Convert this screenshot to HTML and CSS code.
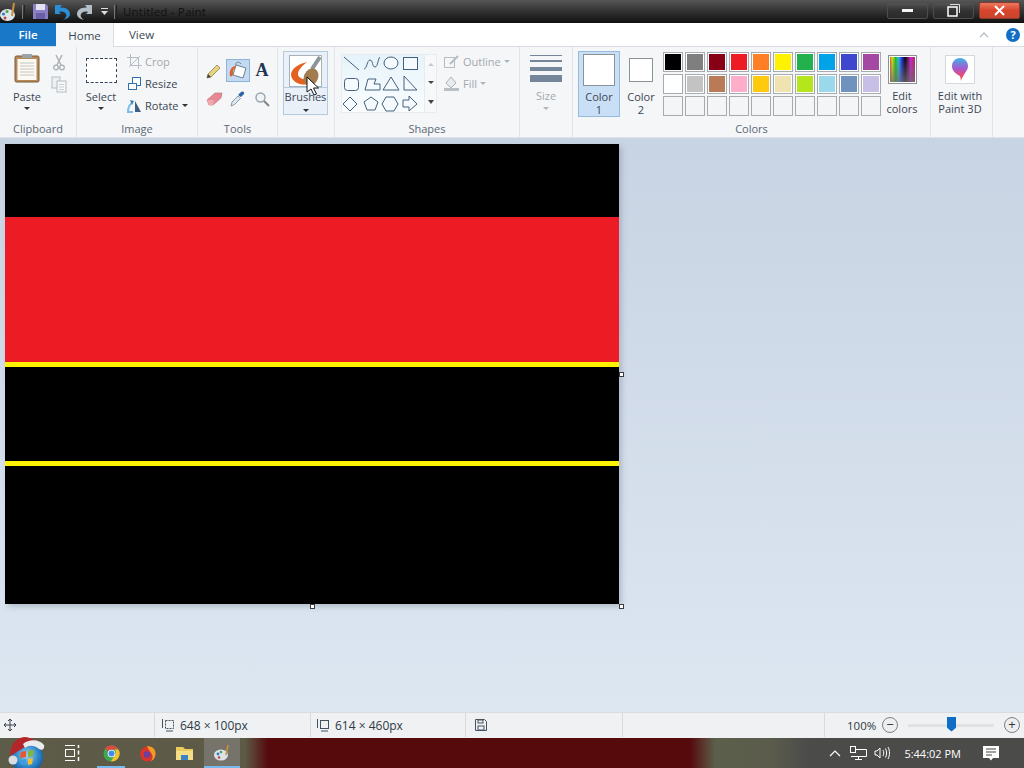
FILE: index.html
```html
<!DOCTYPE html>
<html lang="en">
  <head>
    <meta charset="UTF-8" />
    <title>Untitled - Paint</title>
    <link rel="stylesheet" href="styles.css">
  </head>
  <body>
    <div class="window">
      <!-- title bar -->
      <div class="titlebar">
        <svg class="app-icon" width="18" height="20" viewBox="0 0 18 20"><ellipse cx="7.500" cy="13" rx="7.500" ry="6" fill="#dfe6ea"/><circle cx="3.500" cy="12" r="1.600" fill="#2f7fc1"/><circle cx="7" cy="9.500" r="1.500" fill="#4aa34a"/><circle cx="5" cy="16" r="1.500" fill="#c94040"/><path d="M14 1l-2 13" stroke="#c8923c" stroke-width="2"/></svg>
        <span class="qa-sep"></span>
        <svg class="qa save" width="15" height="15" viewBox="0 0 15 15"><path d="M0 0h13l2 2v13H0z" fill="#8d7fc4"/><rect x="3" y="0" width="9" height="6" fill="#e5e2f2"/><rect x="3" y="9" width="9" height="6" fill="#6a5ea6"/></svg>
        <svg class="qa undo" width="15" height="16" viewBox="0 0 15 16"><path d="M0 1h7L5 3.500C11 3 15 6 15 10c0 3-3 5-7 6 3-2 4-4 3-6-1-2-4-3-7-2L6 10H0z" fill="#2a8fd6"/></svg>
        <svg class="qa redo" width="15" height="16" viewBox="0 0 15 16"><path d="M15 1H8l2 2.500C4 3 0 6 0 10c0 3 3 5 7 6-3-2-4-4-3-6 1-2 4-3 7-2L9 10h6z" fill="#b4bec6"/></svg>
        <svg class="qa-more" width="9" height="9" viewBox="0 0 9 9"><path d="M1 1.500h7" stroke="#ddd"/><path d="M1 4h7L4.500 8z" fill="#ddd"/></svg>
        <span class="qa-sep"></span>
        <span class="title">Untitled - Paint</span>
        <div class="win-btns">
          <div class="win-btn"><span class="min-bar"></span></div>
          <div class="win-btn max"><svg width="13" height="13" viewBox="0 0 13 13"><path d="M3 .500h9.500V9" fill="none" stroke="#ddd"/><rect x="1" y="3" width="9" height="9" fill="none" stroke="#fff" stroke-width="1.500"/></svg></div>
          <div class="win-btn close"><svg width="11" height="11" viewBox="0 0 11 11"><path d="M1 1l9 9M10 1l-9 9" stroke="#fff" stroke-width="2"/></svg></div>
        </div>
      </div>

      <!-- tabs -->
      <div class="tabs">
        <div class="tab file">File</div>
        <div class="tab home">Home</div>
        <div class="tab view">View</div>
        <svg class="collapse" width="10" height="6" viewBox="0 0 10 6"><path d="M1 5l4-4 4 4" fill="none" stroke="#b9bfc6" stroke-width="1.300"/></svg>
        <div class="help">?</div>
      </div>

      <!-- ribbon -->
      <div class="ribbon">
        <div class="group clipboard">
          <div class="group-body">
            <div class="big-btn paste">
              <svg width="26" height="30" viewBox="0 0 26 30"><rect x="1" y="3" width="24" height="26" rx="1.500" fill="#b5895a" stroke="#7a5a38"/><rect x="3.500" y="6" width="19" height="21" fill="#fbf9f2"/><path d="M6 10h14M6 13h14M6 16h14M6 19h14M6 22h14" stroke="#c4c4c0"/><rect x="8" y="1" width="10" height="4" fill="#9aa2aa"/></svg>
              <span class="btn-label">Paste</span>
              <span class="caret"></span>
            </div>
            <div class="small-col">
              <svg width="12" height="17" viewBox="0 0 12 17"><path d="M3 1l5 10M9 1L4 11" stroke="#a9afb5" stroke-width="1.400"/><circle cx="3" cy="13.500" r="2.300" fill="none" stroke="#a9afb5" stroke-width="1.300"/><circle cx="9" cy="13.500" r="2.300" fill="none" stroke="#a9afb5" stroke-width="1.300"/></svg>
              <svg width="16" height="17" viewBox="0 0 16 17"><rect x="1" y="1" width="8" height="11" fill="#eef1f4" stroke="#b4bcc4"/><rect x="6" y="5" width="9" height="11" fill="#f6f7f9" stroke="#b4bcc4"/><path d="M8 8.500h5M8 11h5M8 13.500h5" stroke="#cdd2d8"/></svg>
            </div>
          </div>
          <div class="group-label">Clipboard</div>
        </div>

        <div class="group image">
          <div class="group-body">
            <div class="big-btn select">
              <span class="select-box"></span>
              <span class="btn-label">Select</span>
              <span class="caret"></span>
            </div>
            <div class="text-col">
              <div class="text-row muted">
                <svg width="15" height="15" viewBox="0 0 15 15"><path d="M3.500 0v11.500H15M0 3.500h11.500V15M2 13L13 2" fill="none" stroke="#b6bcc3"/></svg>
                <span>Crop</span>
              </div>
              <div class="text-row">
                <svg width="15" height="15" viewBox="0 0 15 15"><rect x="5.500" y="1.500" width="8" height="8" fill="#fff" stroke="#2f71ad"/><rect x="1.500" y="7.500" width="8" height="6" fill="#fff" stroke="#2f71ad"/></svg>
                <span>Resize</span>
              </div>
              <div class="text-row">
                <svg width="15" height="15" viewBox="0 0 15 15"><path d="M8 14V3l6 11z" fill="#3f5f80"/><path d="M6 14H1C1 9 2 7 5 5" fill="none" stroke="#79bde8" stroke-width="2"/><path d="M3 2l4 1-2 4z" fill="#3f7fb5"/></svg>
                <span>Rotate</span>
                <span class="caret"></span>
              </div>
            </div>
          </div>
          <div class="group-label">Image</div>
        </div>

        <div class="group tools">
          <div class="group-body">
            <div class="tool-grid">
              <div class="tool"><svg width="16" height="16" viewBox="0 0 16 16"><path d="M1 15l1-4 9-9 3 3-9 9z" fill="#e8d27a" stroke="#7d7650" stroke-width=".700"/><path d="M1 15l1-4 3 3z" fill="#444"/></svg></div>
              <div class="tool active"><svg width="20" height="19" viewBox="0 0 20 19"><path d="M8 4l10 3-3 10-10-3z" fill="#fdfdfd" stroke="#6d8194"/><path d="M8 4c-1-3 3-4 5-1" fill="none" stroke="#6d8194"/><path d="M7 5C3 6 1 10 2 15c1 1 3 0 3-2 0-3 0-5 3-7z" fill="#e0602a"/></svg></div>
              <div class="tool letter">A</div>
              <div class="tool"><svg width="17" height="14" viewBox="0 0 17 14"><path d="M1 8l8-7h7l-1 5-8 7H3z" fill="#e58a94" stroke="#c06a74" stroke-width=".600"/><path d="M1 8h7l-1 5H3z" fill="#f0a8ae"/></svg></div>
              <div class="tool"><svg width="16" height="17" viewBox="0 0 16 17"><path d="M1 16l1-4 6-6 2.500 2.500-6 6z" fill="#dce8ef" stroke="#66788a" stroke-width=".700"/><path d="M8 5l3-3c1-1.500 4 0 3 2l-3 3z" fill="#2a65a8"/></svg></div>
              <div class="tool"><svg width="16" height="16" viewBox="0 0 16 16"><circle cx="6.500" cy="6.500" r="4.500" fill="#eef3f6" stroke="#9aa3ab" stroke-width="1.400"/><path d="M10 10l5 5" stroke="#7d8389" stroke-width="2"/></svg></div>
            </div>
          </div>
          <div class="group-label">Tools</div>
        </div>

        <div class="group brushes">
          <div class="group-body">
            <div class="brush-btn">
              <div class="brush-top">
                <svg width="31" height="30" viewBox="0 0 31 30"><path d="M17 6C8 8 1 13 1 19c1 8 11 11 18 9v-5c-6 1-11-1-11-5 0-4 4-8 9-12z" fill="#e4601f"/><path d="M30 1L22 13" stroke="#8c949c" stroke-width="4"/><ellipse cx="21" cy="21" rx="7" ry="9" fill="#a07c4e" transform="rotate(25 21 21)"/></svg>
              </div>
              <span class="btn-label">Brushes</span>
              <span class="caret"></span>
            </div>
          </div>
          <div class="group-label"></div>
        </div>

        <div class="group shapes">
          <div class="group-body">
            <div class="gallery">
              <svg class="shape-set" width="82" height="58" viewBox="0 0 82 58" fill="#f4fafd" stroke="#44607c">
                <path d="M2 2l15 13" fill="none"/>
                <path d="M22 14c3 0 3-9 6-9s2 7 5 7 3-9 5-10" fill="none"/>
                <ellipse cx="49" cy="8" rx="7" ry="6"/>
                <rect x="61.500" y="2.500" width="14" height="12"/>
                <rect x="2.500" y="23.500" width="14" height="12" rx="3"/>
                <path d="M23 35l3-11h8l-2 5h6v6z"/>
                <path d="M49 22l8 13H41z"/>
                <path d="M62 21l13 14H62z"/>
                <path d="M8 42l7 7-7 7-7-7z"/>
                <path d="M29 42l7 5-3 8h-8l-3-8z"/>
                <path d="M44 42h8l4 7-4 7h-8l-4-7z"/>
                <path d="M61 45h6v-4l8 8-8 7v-4h-6z"/>
              </svg>
              <div class="gallery-scroll">
                <span class="arrow up"></span>
                <span class="arrow"></span>
                <span class="arrow more"></span>
              </div>
            </div>
            <div class="text-col shape-opts">
              <div class="text-row muted">
                <svg width="17" height="15" viewBox="0 0 17 15"><rect x="1.500" y="3.500" width="10" height="10" fill="none" stroke="#b6bcc3"/><path d="M7 10l8-8" stroke="#b6bcc3" stroke-width="2"/></svg>
                <span>Outline</span>
                <span class="caret light"></span>
              </div>
              <div class="text-row muted">
                <svg width="17" height="15" viewBox="0 0 17 15"><path d="M8 1l5 6-5 5-5-5z" fill="#e8ecef" stroke="#aab1b8"/><rect x="1" y="12" width="15" height="3" fill="#b9bfc5"/></svg>
                <span>Fill</span>
                <span class="caret light"></span>
              </div>
            </div>
          </div>
          <div class="group-label">Shapes</div>
        </div>

        <div class="group size">
          <div class="group-body">
            <div class="big-btn size-btn">
              <div class="size-lines">
                <span class="line l1"></span>
                <span class="line l2"></span>
                <span class="line l3"></span>
                <span class="line l4"></span>
              </div>
              <span class="btn-label muted">Size</span>
              <span class="caret light"></span>
            </div>
          </div>
          <div class="group-label"></div>
        </div>

        <div class="group colors">
          <div class="group-body">
            <div class="color-btn selected">
              <span class="swatch-big"></span>
              <span class="btn-label">Color<br>1</span>
            </div>
            <div class="color-btn">
              <span class="swatch-mid"></span>
              <span class="btn-label">Color<br>2</span>
            </div>
            <div class="palette">
              <span class="cell c-black"></span><span class="cell c-gray"></span><span class="cell c-maroon"></span><span class="cell c-red"></span><span class="cell c-orange"></span><span class="cell c-yellow"></span><span class="cell c-green"></span><span class="cell c-blue"></span><span class="cell c-indigo"></span><span class="cell c-purple"></span>
              <span class="cell c-white"></span><span class="cell c-silver"></span><span class="cell c-brown"></span><span class="cell c-pink"></span><span class="cell c-gold"></span><span class="cell c-cream"></span><span class="cell c-lime"></span><span class="cell c-sky"></span><span class="cell c-steel"></span><span class="cell c-lilac"></span>
              <span class="cell"></span><span class="cell"></span><span class="cell"></span><span class="cell"></span><span class="cell"></span><span class="cell"></span><span class="cell"></span><span class="cell"></span><span class="cell"></span><span class="cell"></span>
            </div>
            <div class="big-btn edit-colors">
              <span class="rainbow"></span>
              <span class="btn-label">Edit<br>colors</span>
            </div>
          </div>
          <div class="group-label">Colors</div>
        </div>

        <div class="group paint3d">
          <div class="group-body">
            <div class="big-btn edit3d">
              <span class="icon-box">
                <svg width="18" height="26" viewBox="0 0 18 26"><defs><linearGradient id="balloon" x1="0" y1="0" x2="0" y2="1"><stop offset="0" stop-color="#3fb4e8"/><stop offset=".45" stop-color="#a45ad0"/><stop offset=".8" stop-color="#f0486a"/><stop offset="1" stop-color="#f08a4a"/></linearGradient></defs><path d="M9 1c5 0 8 4 8 8 0 5-5 8-7 15l-1-5C5 17 1 14 1 9c0-4 3-8 8-8z" fill="url(#balloon)"/></svg>
              </span>
              <span class="btn-label">Edit with<br>Paint 3D</span>
            </div>
          </div>
          <div class="group-label"></div>
        </div>
      </div>

      <!-- drawing area -->
      <div class="workspace">
        <div class="canvas">
          <div class="band b-top"></div>
          <div class="band b-red"></div>
          <div class="band b-line"></div>
          <div class="band b-mid"></div>
          <div class="band b-line"></div>
          <div class="band b-low"></div>
          <span class="handle right"></span>
          <span class="handle bottom"></span>
          <span class="handle corner"></span>
        </div>
      </div>

      <!-- status bar -->
      <div class="statusbar">
        <div class="stat s-pos"><svg width="12" height="12" viewBox="0 0 12 12"><path d="M6 0v12M0 6h12M4 2l2-2 2 2M4 10l2 2 2-2M2 4L0 6l2 2M10 4l2 2-2 2" fill="none" stroke="#33414f"/></svg></div>
        <div class="stat s-sel"><svg width="14" height="13" viewBox="0 0 14 13"><rect x="4.500" y="1.500" width="8" height="8" fill="none" stroke="#44525f" stroke-dasharray="2 1"/><path d="M1.500 0v9M5 12h7" stroke="#44525f"/></svg><span>648 × 100px</span></div>
        <div class="stat s-size"><svg width="14" height="13" viewBox="0 0 14 13"><rect x="4.500" y="1.500" width="8" height="8" fill="none" stroke="#44525f"/><path d="M1.500 0v9M5 12h7" stroke="#44525f"/></svg><span>614 × 460px</span></div>
        <div class="stat s-disk"><svg width="12" height="12" viewBox="0 0 12 12"><path d="M.500.500h9l2 2v9H.500z" fill="none" stroke="#44525f"/><rect x="3" y="1" width="5" height="3" fill="none" stroke="#44525f"/><rect x="3" y="7" width="6" height="4" fill="none" stroke="#44525f"/></svg></div>
        <div class="stat s-empty"></div>
        <div class="stat s-zoom">
          <span class="zoom-pct">100%</span>
          <span class="zoom-btn">−</span>
          <div class="zoom-track"><span class="zoom-thumb"></span></div>
          <span class="zoom-btn">+</span>
        </div>
      </div>

      <!-- taskbar -->
      <div class="taskbar">
        <div class="orb">
          <svg width="40" height="37" viewBox="0 0 40 37"><defs><radialGradient id="orb" cx=".5" cy=".45" r=".6"><stop offset="0" stop-color="#9ad0ee"/><stop offset=".6" stop-color="#2d86c8"/><stop offset="1" stop-color="#0d4f92"/></radialGradient></defs><circle cx="21" cy="22" r="16" fill="url(#orb)"/><path d="M15 17l5-1v6l-6 1z" fill="#e8562a"/><path d="M22 16l6-1-1 6-5 1z" fill="#7fb83a"/><path d="M14 25l6-1v6l-6-1z" fill="#3f9ce0"/><path d="M22 24l5-1-1 6-4 1z" fill="#f2c02e"/><path d="M4 21C4 11 9 3 18 2c4 0 8 1 11 4L14 15z" fill="#b5262a"/><path d="M17 9c6-5 16-5 21 1 1 4-2 6-5 4-5-4-10-4-14-1z" fill="#e9ebec"/><circle cx="7" cy="25" r="4.500" fill="#d9dde0"/></svg>
        </div>
        <div class="task taskview"><svg width="16" height="16" viewBox="0 0 16 16"><path d="M1 .500h10M1 15.500h10" stroke="#fff"/><rect x="1.500" y="4.500" width="9" height="7" fill="none" stroke="#fff"/><path d="M14.500 0v3M14.500 5.500v4M14.500 12v4" stroke="#fff" stroke-width="1.500"/></svg></div>
        <div class="task chrome"><svg width="17" height="17" viewBox="0 0 17 17"><circle cx="8.500" cy="8.500" r="8" fill="#3fa84f"/><path d="M8.500.500a8 8 0 0 1 7 4h-7a4 4 0 0 0-3.500 2L2 3a8 8 0 0 1 6.500-2.500z" fill="#dd4b3e"/><path d="M15.500 4.500A8 8 0 0 1 8 16.500l3.500-6a4 4 0 0 0 0-6z" fill="#f2c12e"/><circle cx="8.500" cy="8.500" r="3.800" fill="#fff"/><circle cx="8.500" cy="8.500" r="3" fill="#4688ee"/></svg></div>
        <div class="task firefox"><svg width="17" height="17" viewBox="0 0 17 17"><circle cx="8.500" cy="9" r="7.500" fill="#d8352c"/><path d="M8 1c6 0 9 4 8.500 8.500-.5 4-3 6-5 7 2-2 3-5 1-8C11 6 9 4 8 1z" fill="#f59b23"/><circle cx="8" cy="9.500" r="3.300" fill="#6b3fa0"/></svg></div>
        <div class="task explorer"><svg width="17" height="15" viewBox="0 0 17 15"><path d="M0 1h7l2 2h8v11H0z" fill="#eccb5e"/><rect x="0" y="5" width="17" height="9" fill="#f6de86"/><rect x="5" y="9" width="7" height="5" fill="#3a85c8"/></svg></div>
        <div class="task paint-task"><svg width="16" height="16" viewBox="0 0 16 16"><ellipse cx="7" cy="10" rx="7" ry="5.500" fill="#dbe3e8"/><circle cx="4" cy="9" r="1.400" fill="#2f7fc1"/><circle cx="7" cy="7" r="1.300" fill="#4aa34a"/><circle cx="5" cy="12.500" r="1.300" fill="#c94040"/><path d="M14 0l-2 10" stroke="#c8923c" stroke-width="1.600"/></svg></div>
        <div class="tray">
          <svg width="12" height="7" viewBox="0 0 12 7"><path d="M1 6l5-5 5 5" fill="none" stroke="#fff" stroke-width="1.200"/></svg>
          <svg class="tray-net" width="17" height="14" viewBox="0 0 17 14"><path d="M6 3.500h10.500v7H1" fill="none" stroke="#fff"/><rect x=".500" y=".500" width="5" height="6" fill="#4a4a46" stroke="#fff"/><path d="M8.500 10.500v3M5 13.500h7" stroke="#fff"/></svg>
          <svg class="tray-vol" width="17" height="14" viewBox="0 0 17 14"><path d="M1 5h2l3-3v10L3 9H1z" fill="none" stroke="#fff"/><path d="M9 4c1 2 1 4 0 6M11.500 2.500c1.500 3 1.500 6 0 9M14 1c2 4 2 8 0 12" fill="none" stroke="#fff"/></svg>
          <span class="clock">5:44:02 PM</span>
          <svg class="notif" width="16" height="15" viewBox="0 0 16 15"><path d="M0 0h16v12H10l-2 2.500L6 12H0z" fill="#fff"/><path d="M3 3h10M3 6h10M3 9h6" stroke="#444"/></svg>
        </div>
      </div>

      <!-- mouse pointer -->
      <svg class="pointer" width="13" height="20" viewBox="0 0 13 20"><path d="M1 1v15l4-3 3 6 2.500-1-3-6h5z" fill="#fff" stroke="#111"/></svg>
    </div>
  </body>
</html>
```

FILE: styles.css
```css
* {
  box-sizing: border-box;
  margin: 0;
  padding: 0;
}

body {
  width: 1024px;
  height: 768px;
  overflow: hidden;
  font-family: "Open Sans", "Noto Sans", sans-serif;
  font-size: 11px;
  color: #3b4754;
}

svg {
  display: block;
  flex: none;
}

.window {
  position: relative;
  width: 1024px;
  height: 768px;
  display: flex;
  flex-direction: column;
}

/* title bar */
.titlebar {
  height: 23px;
  display: flex;
  align-items: center;
  background: linear-gradient(#565656, #353535 45%, #101010);
}
.app-icon {
  margin-right: 4px;
}
.qa-sep {
  width: 3px;
  height: 14px;
  border-left: 1px solid #777;
  border-right: 1px solid #222;
}
.qa {
  margin-left: 7px;
}
.qa.save {
  margin-left: 8px;
}
.qa-more {
  margin: 0 5px 0 8px;
}
.title {
  margin-left: 6px;
  font-size: 11.500px;
  color: #101010;
  letter-spacing: .2px;
}
.win-btns {
  margin-left: auto;
  display: flex;
  gap: 5px;
  padding: 2px 0 0;
  margin-right: 4px;
  align-self: flex-start;
}
.win-btn {
  width: 41px;
  height: 17px;
  border-radius: 2px;
  display: flex;
  align-items: center;
  justify-content: center;
  border: 1px solid #4d4d4d;
  background: linear-gradient(#545454, #333 50%, #2a2a2a);
}
.win-btn.close {
  background: linear-gradient(#ec7a5f, #d9432a 50%, #c9452f);
  border-color: #8d3b2b;
}
.min-bar {
  width: 11px;
  height: 3px;
  background: #f4f4f4;
}

/* tabs */
.tabs {
  height: 24px;
  display: flex;
  align-items: center;
  background: #fff;
  border-bottom: 1px solid #d9dde2;
  font-size: 11.500px;
}
.tab {
  height: 23px;
  display: flex;
  align-items: center;
  justify-content: center;
  align-self: flex-start;
}
.tab.file {
  width: 56px;
  background: #1a78c9;
  color: #fff;
  font-weight: 600;
}
.tab.home {
  width: 58px;
  height: 24px;
  background: #f5f6f7;
  border-right: 1px solid #d9dde2;
}
.tab.view {
  width: 55px;
}
.collapse {
  margin-left: auto;
  margin-right: 17px;
}
.help {
  width: 14px;
  height: 14px;
  margin-right: 4px;
  border-radius: 50%;
  background: #1170c4;
  color: #fff;
  font-size: 11px;
  font-weight: 700;
  line-height: 14px;
  text-align: center;
}

/* ribbon */
.ribbon {
  height: 91px;
  display: flex;
  background: #f5f6f7;
  border-bottom: 1px solid #dfe3e8;
}
.group {
  display: flex;
  flex-direction: column;
  flex: none;
  height: 90px;
  border-right: 1px solid #e1e4e8;
}
.group-body {
  height: 75px;
  display: flex;
}
.group-label {
  height: 14px;
  line-height: 14px;
  text-align: center;
  color: #5b6876;
}
.btn-label {
  line-height: 13px;
  text-align: center;
}
.muted {
  color: #a2a9b0;
}
.caret {
  width: 0;
  height: 0;
  border: 3px solid transparent;
  border-top: 3px solid #333;
  border-bottom: 0;
}
.caret.light {
  border-top-color: #b0b5bb;
}
.big-btn {
  display: flex;
  flex-direction: column;
  align-items: center;
}
.big-btn .caret {
  margin-top: 4px;
}

.clipboard {
  width: 77px;
}
.paste {
  width: 40px;
  margin-left: 7px;
  padding-top: 6px;
}
.paste .btn-label {
  margin-top: 7px;
}
.small-col {
  width: 23px;
  padding-top: 7px;
  display: flex;
  flex-direction: column;
  align-items: center;
  gap: 5px;
}

.image {
  width: 121px;
}
.select {
  width: 38px;
  margin-left: 5px;
  padding-top: 11px;
}
.select-box {
  width: 31px;
  height: 25px;
  border: 1px dashed #33475a;
  background: #fff;
}
.select .btn-label {
  margin-top: 7px;
}
.text-col {
  margin-left: 7px;
  padding-top: 3px;
  display: flex;
  flex-direction: column;
}
.text-row {
  height: 22px;
  display: flex;
  align-items: center;
  gap: 3px;
}

.tools {
  width: 80px;
}
.tool-grid {
  margin: 12px 0 0 4px;
  display: grid;
  grid-template-columns: repeat(3, 24px);
  grid-auto-rows: 23px;
  row-gap: 5px;
}
.tool {
  display: flex;
  align-items: center;
  justify-content: center;
}
.tool.active {
  background: #c4daf2;
  border: 1px solid #8eb3d8;
}
.tool.letter {
  font-family: "Liberation Serif", serif;
  font-size: 18px;
  font-weight: 700;
  color: #1f3554;
}

.brushes {
  width: 57px;
}
.brush-btn {
  width: 45px;
  height: 64px;
  margin: 4px 0 0 5px;
  display: flex;
  flex-direction: column;
  align-items: center;
  background: #e9f0f8;
  border: 1px solid #b5cadd;
}
.brush-top {
  width: 33px;
  height: 32px;
  margin-top: 3px;
  background: #fff;
  border: 1px solid #a8b0b8;
}
.brush-btn .btn-label {
  width: 100%;
  border-top: 1px solid #b5cadd;
  padding-top: 2px;
}
.brush-btn .caret {
  margin-top: 6px;
}

.shapes {
  width: 185px;
}
.gallery {
  width: 96px;
  height: 59px;
  margin: 7px 0 0 6px;
  display: flex;
  background: linear-gradient(#e6f3fa, #fafdfe);
  border: 1px solid #e8ecef;
}
.shape-set {
  width: 82px;
  height: 58px;
}
.gallery-scroll {
  flex: 1;
  display: flex;
  flex-direction: column;
  align-items: center;
  justify-content: space-around;
  background: #f7f8f9;
  border-left: 1px solid #e8ecef;
}
.arrow {
  width: 0;
  height: 0;
  border: 3px solid transparent;
  border-top: 3px solid #444;
  border-bottom: 0;
}
.arrow.up {
  border-top: 0;
  border-bottom: 3px solid #c5c9ce;
}
.arrow.more {
  border-top: 4px solid #444;
  box-shadow: 0 -3px 0 -2px #444;
}
.shape-opts {
  margin-left: 6px;
}

.size {
  width: 53px;
}
.size-btn {
  width: 100%;
  padding-top: 8px;
}
.size-lines {
  width: 32px;
  height: 28px;
  display: flex;
  flex-direction: column;
}
.line {
  display: block;
  background: #75859a;
}
.l1 { height: 1px; margin-bottom: 4px; }
.l2 { height: 2px; margin-bottom: 5px; }
.l3 { height: 4px; margin-bottom: 4px; }
.l4 { height: 7px; }
.size-btn .btn-label {
  margin-top: 6px;
}
.size-btn .caret {
  margin-top: 5px;
}

.colors {
  width: 358px;
}
.color-btn {
  width: 42px;
  height: 66px;
  margin-top: 4px;
  display: flex;
  flex-direction: column;
  align-items: center;
  border: 1px solid transparent;
}
.colors .color-btn:first-child {
  margin-left: 5px;
}
.color-btn.selected {
  background: #c9dff5;
  border-color: #97bbdd;
}
.swatch-big {
  width: 32px;
  height: 32px;
  margin-top: 2px;
  background: #fff;
  border: 1px solid #8a9197;
}
.swatch-mid {
  width: 24px;
  height: 24px;
  margin: 6px 0 4px;
  background: #fff;
  border: 1px solid #8a9197;
}
.color-btn .btn-label {
  margin-top: 4px;
}
.palette {
  margin: 5px 0 0 1px;
  display: grid;
  grid-template-columns: repeat(10, 20px);
  grid-auto-rows: 20px;
  gap: 2px;
  height: 64px;
}
.cell {
  border: 1px solid #a6abb0;
  background: #f3f5f7;
}
.c-black { background: #000; box-shadow: inset 0 0 0 1px #fff; }
.c-gray { background: #7f7f7f; box-shadow: inset 0 0 0 1px #fff; }
.c-maroon { background: #880015; box-shadow: inset 0 0 0 1px #fff; }
.c-red { background: #ed1c24; box-shadow: inset 0 0 0 1px #fff; }
.c-orange { background: #ff7f27; box-shadow: inset 0 0 0 1px #fff; }
.c-yellow { background: #fff200; box-shadow: inset 0 0 0 1px #fff; }
.c-green { background: #22b14c; box-shadow: inset 0 0 0 1px #fff; }
.c-blue { background: #00a2e8; box-shadow: inset 0 0 0 1px #fff; }
.c-indigo { background: #3f48cc; box-shadow: inset 0 0 0 1px #fff; }
.c-purple { background: #a349a4; box-shadow: inset 0 0 0 1px #fff; }
.c-white { background: #fff; }
.c-silver { background: #c3c3c3; box-shadow: inset 0 0 0 1px #fff; }
.c-brown { background: #b97a57; box-shadow: inset 0 0 0 1px #fff; }
.c-pink { background: #ffaec9; box-shadow: inset 0 0 0 1px #fff; }
.c-gold { background: #ffc90e; box-shadow: inset 0 0 0 1px #fff; }
.c-cream { background: #efe4b0; box-shadow: inset 0 0 0 1px #fff; }
.c-lime { background: #b5e61d; box-shadow: inset 0 0 0 1px #fff; }
.c-sky { background: #99d9ea; box-shadow: inset 0 0 0 1px #fff; }
.c-steel { background: #7092be; box-shadow: inset 0 0 0 1px #fff; }
.c-lilac { background: #c8bfe7; box-shadow: inset 0 0 0 1px #fff; }
.edit-colors {
  width: 42px;
  padding-top: 8px;
}
.rainbow {
  width: 29px;
  height: 29px;
  border: 1px solid #8a9197;
  box-shadow: inset 0 0 0 1px #fff;
  background:
    linear-gradient(rgba(0, 0, 0, 0), rgba(110, 110, 110, .8)),
    linear-gradient(90deg, #e02020, #e0e020, #20c020, #20c0e0, #2020e0, #000 60%, #d020d0, #b02040);
}
.edit-colors .btn-label,
.edit3d .btn-label {
  margin-top: 5px;
}
.paint3d {
  width: 62px;
}
.edit3d {
  width: 58px;
  padding-top: 8px;
}
.icon-box {
  width: 30px;
  height: 29px;
  background: #fff;
  border: 1px solid #d6d9dc;
  display: flex;
  align-items: center;
  justify-content: center;
}

/* drawing area */
.workspace {
  flex: 1;
  padding: 6px 0 0 5px;
  background: linear-gradient(#c8d3e3, #dde7f2);
}
.canvas {
  position: relative;
  width: 614px;
  height: 460px;
  display: flex;
  flex-direction: column;
  box-shadow: 3px 3px 5px rgba(90, 105, 125, .28);
}
.band {
  flex: none;
  background: #000;
}
.b-top { height: 73px; }
.b-red { height: 145px; background: #ed1c24; }
.b-line { height: 5px; background: #fff200; }
.b-mid { height: 94px; }
.b-low { height: 138px; }
.handle {
  position: absolute;
  width: 5px;
  height: 5px;
  background: #fff;
  border: 1px solid #3c3c3c;
}
.handle.right { left: 614px; top: 228px; }
.handle.bottom { left: 305px; top: 460px; }
.handle.corner { left: 614px; top: 460px; }

/* status bar */
.statusbar {
  height: 26px;
  display: flex;
  background: #f0f1f2;
  border-top: 1px solid #d8dcdf;
  font-size: 12px;
  color: #2e3a46;
}
.stat {
  display: flex;
  align-items: center;
  height: 24px;
  border-right: 1px solid #d8dadc;
}
.s-pos { width: 155px; padding-left: 4px; }
.s-sel { width: 156px; padding-left: 6px; gap: 5px; }
.s-size { width: 155px; padding-left: 5px; gap: 5px; }
.s-disk { width: 157px; padding-left: 9px; }
.s-empty { width: 202px; }
.s-zoom {
  flex: 1;
  padding-left: 22px;
  border-right: 0;
}
.zoom-pct {
  width: 35px;
  font-size: 11.500px;
}
.zoom-btn {
  width: 16px;
  height: 16px;
  border-radius: 50%;
  border: 1px solid #7b8288;
  background: #eceef0;
  font-size: 13px;
  line-height: 13px;
  text-align: center;
  color: #333;
}
.zoom-track {
  position: relative;
  width: 86px;
  height: 3px;
  margin: 0 10px;
  background: #e0e2e4;
}
.zoom-thumb {
  position: absolute;
  left: 39px;
  top: -7px;
  width: 9px;
  height: 15px;
  background: #0f6fc6;
  clip-path: polygon(0 0, 100% 0, 100% 75%, 50% 100%, 0 75%);
}

/* taskbar */
.taskbar {
  height: 30px;
  display: flex;
  align-items: center;
  background: linear-gradient(90deg, #5d5c49 0, #5d5a46 245px, #560a0c 268px, #560a0c 690px, #5c5f4b 715px, #5b5c4c 770px, #4b4b4a 810px);
  color: #fff;
}
.orb {
  width: 53px;
  height: 30px;
  margin-top: -7px;
  padding-left: 6px;
}
.task {
  width: 36px;
  height: 30px;
  display: flex;
  align-items: center;
  justify-content: center;
}
.taskview {
  width: 38px;
}
.chrome {
  width: 28px;
  margin: 0 4px 0 6px;
  border-top: 2px solid transparent;
  border-bottom: 2px solid #76b9ed;
}
.explorer {
  margin: 0 2px 0 1px;
}
.paint-task {
  background: #75736a;
  border-top: 2px solid transparent;
  border-bottom: 2px solid #76b9ed;
}
.tray {
  margin-left: auto;
  display: flex;
  align-items: center;
  padding-right: 25px;
}
.tray-net {
  margin-left: 9px;
}
.tray-vol {
  margin-left: 7px;
}
.clock {
  margin: 0 22px 0 13px;
  font-size: 11px;
}

.pointer {
  position: absolute;
  left: 306px;
  top: 76px;
}
```
